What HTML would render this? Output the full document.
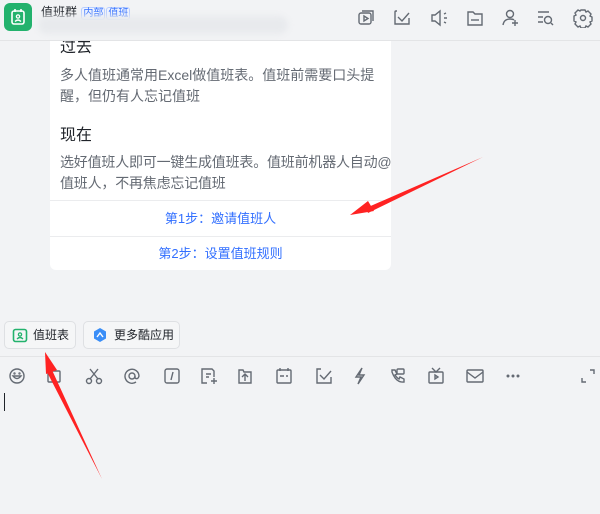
<!DOCTYPE html>
<html><head><meta charset="utf-8"><style>
body{margin:0;width:600px;height:514px;background:#f2f3f5;font-family:"Liberation Sans","Noto Sans CJK SC",sans-serif;position:relative;overflow:hidden}
.hdr{position:absolute;left:0;top:0;width:600px;height:40px;border-bottom:1px solid #e3e4e6;background:#f2f3f5;z-index:2}
.logo{position:absolute;left:4px;top:3px;width:28px;height:28px;border-radius:6px;background:#23b26d}
.title{position:absolute;left:41px;top:3px;font-size:12px;color:#1f2329}
.tag{font-size:10px;color:#3370ff;border:1px solid #b7cdff;border-radius:3px;padding:0 1px;margin-left:1px;background:#eef3ff}
.blur{position:absolute;left:38px;top:16px;width:250px;height:18px;background:#e8eaed;border-radius:10px;filter:blur(3px)}
.card{position:absolute;left:50px;top:20px;width:341px;height:250px;background:#fff;border-radius:6px}
.h{position:absolute;left:10px;font-size:16px;color:#1f2329}
.p{position:absolute;left:10px;white-space:nowrap;font-size:14px;line-height:21px;color:#646a73}
.btnl{position:absolute;left:0;width:341px;text-align:center;font-size:13px;color:#3370ff;border-top:1px solid #ebecee}
.ib{position:absolute;top:321px;height:26px;border:1px solid #dee0e3;border-radius:5px;background:#f5f6f7;font-size:12px;color:#1f2329;line-height:26px}
</style></head><body>
<div class="card">
<div class="h" style="top:13px">过去</div>
<div class="p" style="top:45px">多人值班通常用Excel做值班表。值班前需要口头提<br>醒，但仍有人忘记值班</div>
<div class="h" style="top:101px">现在</div>
<div class="p" style="top:132px;letter-spacing:-0.2px">选好值班人即可一键生成值班表。值班前机器人自动@<br>值班人，不再焦虑忘记值班</div>
<div class="btnl" style="top:180px;height:35px;line-height:35px">第1步：邀请值班人</div>
<div class="btnl" style="top:216px;height:34px;line-height:34px">第2步：设置值班规则</div>
</div>
<div class="hdr">
<div class="logo"><svg width="28" height="28" viewBox="0 0 28 28"><rect x="8" y="8" width="12" height="13" rx="2" fill="none" stroke="#fff" stroke-width="1.6"/><line x1="11" y1="6" x2="11" y2="9" stroke="#fff" stroke-width="1.6"/><line x1="17" y1="6" x2="17" y2="9" stroke="#fff" stroke-width="1.6"/><circle cx="14" cy="13.5" r="1.6" fill="none" stroke="#fff" stroke-width="1.3"/><path d="M11 18.5q3-3 6 0" fill="none" stroke="#fff" stroke-width="1.3"/></svg></div>
<div class="title">值班群 <span class="tag">内部</span><span class="tag">值班</span></div>
<div class="blur"></div>
<svg style="position:absolute;left:355px;top:8px" width="240" height="20" viewBox="0 0 240 20" fill="none" stroke="#646a73" stroke-width="1.4">
<rect x="4" y="5" width="12" height="11" rx="2"/><path d="M7 3h11v10"/><path d="M9 8l4 2.5-4 2.5z"/>
<path d="M42 3h-1a1 1 0 0 0-1 1v12h14V10"/><path d="M43 9l4 4 7-8"/>
<path d="M77 7h3l5-4v14l-5-4h-3z"/><path d="M89 6l2-1M89 10h3M89 14l2 1"/>
<path d="M113 4h5l2 2h7v11h-14z"/><path d="M116 12h8"/>
<circle cx="155" cy="6" r="3.5"/><path d="M148 17q1-6 7-6 3 0 4 1"/><path d="M160 12v6M157 15h6"/>
<path d="M183 4h11M183 9h5M183 14h5"/><circle cx="193" cy="12" r="3.5"/><path d="M196 15l2 2"/>
<circle cx="228" cy="10" r="2.5"/><path d="M226 2h4l1 2 2-1 3 3-1 2 2 1v4l-2 1 1 2-3 3-2-1-1 2h-4l-1-2-2 1-3-3 1-2-2-1V8l2-1-1-2 3-3 2 1z"/>
</svg>
</div>
<div class="ib" style="left:4px;width:70px"><svg style="position:absolute;left:7px;top:5px" width="16" height="16"><rect x="1.5" y="2.5" width="13" height="12" rx="2" fill="none" stroke="#23b26d" stroke-width="1.6"/><circle cx="8" cy="7.5" r="1.6" fill="none" stroke="#23b26d" stroke-width="1.3"/><path d="M5 12q3-3 6 0" fill="none" stroke="#23b26d" stroke-width="1.3"/></svg><span style="position:absolute;left:28px">值班表</span></div>
<div class="ib" style="left:83px;width:95px"><svg style="position:absolute;left:8px;top:5px" width="16" height="16"><path d="M8 1l6 3.5v7L8 15l-6-3.5v-7z" fill="#3a8ef7"/><path d="M5 10l3-4 3 4" fill="none" stroke="#fff" stroke-width="1.4"/></svg><span style="position:absolute;left:30px">更多酷应用</span></div>
<div style="position:absolute;left:0;top:356px;width:600px;height:1px;background:#e3e4e6"></div>
<svg style="position:absolute;left:0;top:366px" width="600" height="20" viewBox="0 0 600 20" fill="none" stroke="#646a73" stroke-width="1.4">
<circle cx="17" cy="10" r="7"/><path d="M13 10q4 5 8 0z"/><circle cx="14.5" cy="7.5" r=".5"/><circle cx="19.5" cy="7.5" r=".5"/>
<rect x="48" y="5" width="12" height="11" rx="1"/>
<circle cx="89" cy="15" r="2.5"/><circle cx="99" cy="15" r="2.5"/><path d="M90 13l8-10M98 13l-8-10"/>
<circle cx="132" cy="10" r="3"/><path d="M135 10v2q3 2 4-2a7 7 0 1 0-3 6"/>
<rect x="165" y="3" width="14" height="14" rx="2"/><path d="M173 6l-2 8"/>
<path d="M207 17h-5V3h10l2 2v6M206 8h5M206 11h3M211 15h6M214 12v6"/>
<path d="M239 4h4l1 2h7v11h-12z"/><path d="M245 15v-6M242 11l3-3 3 3"/>
<rect x="277" y="4" width="14" height="13" rx="1"/><path d="M280 2v3M288 2v3M280 10h4M286 10h2"/>
<path d="M321 3h-4v14h14v-6"/><path d="M320 9l4 4 7-8"/>
<path d="M362 2l-6 9h5l-3 7 6-9h-5z"/>
<path d="M392 4l3 0 2 4-2 1q2 3 4 4l1-2 4 2v3q-8 1-12-10z"/><rect x="397" y="3" width="7" height="5" rx="1"/>
<rect x="429" y="6" width="14" height="11" rx="1"/><path d="M432 2l4 4 4-4M435 9l3 2-3 2z"/>
<rect x="467" y="4" width="16" height="12" rx="1"/><path d="M467 6l8 6 8-6"/>
<circle cx="508" cy="10" r=".8" fill="#646a73"/><circle cx="513" cy="10" r=".8" fill="#646a73"/><circle cx="518" cy="10" r=".8" fill="#646a73"/>
<path d="M582 12v4h4M594 8V4h-4"/>
</svg>
<div style="position:absolute;left:4px;top:393px;width:1px;height:18px;background:#1f2329"></div>
<svg style="position:absolute;left:0;top:0" width="600" height="514">
<path d="M483 157L366 208l2 5z" fill="#f22"/><path d="M350 215l18-14 6 10z" fill="#f22"/>
<path d="M102 479L52 370l-5 2z" fill="#f22"/><path d="M45 352l12 18-11 4z" fill="#f22"/>
</svg>
</body></html>
